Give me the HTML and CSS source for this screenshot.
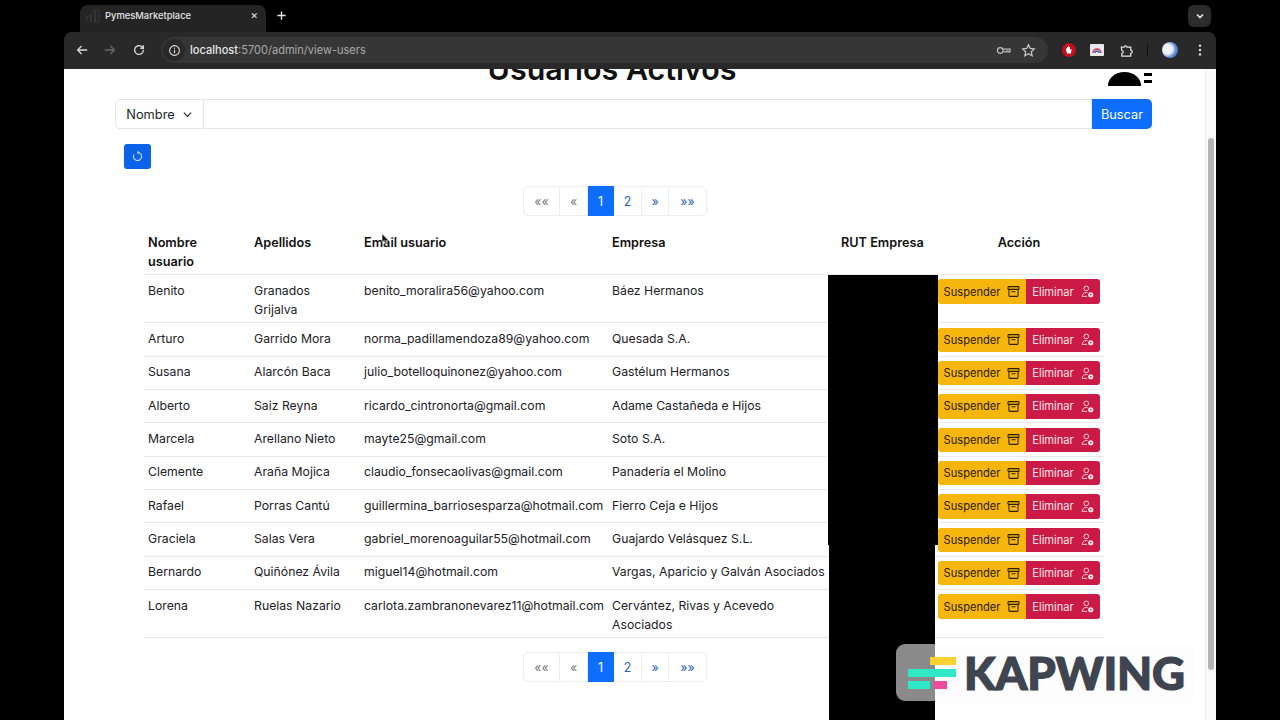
FILE: index.html
```html
<!DOCTYPE html>
<html lang="es">
<head>
<meta charset="utf-8">
<title>PymesMarketplace</title>
<link rel="stylesheet" href="styles.css">
</head>
<body>
<svg class="defs" width="0" height="0">
  <symbol id="archive" viewBox="0 0 16 16"><rect x="1.2" y="2" width="13.6" height="3.4" rx=".8" fill="none" stroke="currentColor" stroke-width="1.3"/><path d="M2.4 5.4V13a1 1 0 0 0 1 1h9.2a1 1 0 0 0 1-1V5.4M5.5 8.2h5" fill="none" stroke="currentColor" stroke-width="1.3"/></symbol>
  <symbol id="person-gear" viewBox="0 0 16 16"><circle cx="6.5" cy="4.2" r="2.9" fill="none" stroke="currentColor" stroke-width="1.1"/><path d="M1.4 14c.1-3 2.3-4.8 5.1-4.8.6 0 1.1.1 1.6.2M1.4 14h6" fill="none" stroke="currentColor" stroke-width="1.1"/><circle cx="12" cy="12" r="2.1" fill="none" stroke="currentColor" stroke-width="2.2"/></symbol>
</svg>
<div class="window">
  <div class="tabstrip">
    <div class="tab">
      <svg class="favicon" viewBox="0 0 16 16"><path d="M1 15V9l4-2v8M6 15V5l4-3v13M11 15V1h4v14z" fill="none" stroke="#3c3c3c"/></svg>
      <span class="tab-title">PymesMarketplace</span>
      <span class="tab-close">✕</span>
    </div>
    <svg class="newtab" viewBox="0 0 12 12"><path d="M6 1.5v9M1.5 6h9" stroke="#e8e8e8" stroke-width="1.5"/></svg>
    <div class="tabmenu"><svg viewBox="0 0 12 12"><path d="M3 4.500 6 7.500 9 4.500" fill="none" stroke="#e8e8e8" stroke-width="1.600"/></svg></div>
  </div>
  <div class="toolbar">
    <svg class="nav nav-back" viewBox="0 0 16 16"><path d="M14 8H3M7.500 3.500 3 8l4.500 4.500" fill="none" stroke="#d8d8d8" stroke-width="1.500"/></svg>
    <svg class="nav" viewBox="0 0 16 16"><path d="M2 8h11M8.500 3.500 13 8l-4.500 4.500" fill="none" stroke="#666" stroke-width="1.500"/></svg>
    <svg class="nav" viewBox="0 0 16 16"><path d="M13 8a5 5 0 1 1-1.500-3.500L13 6V2.500M13 6H9.500" fill="none" stroke="#d8d8d8" stroke-width="1.500"/></svg>
    <div class="omnibox">
      <span class="info"><svg viewBox="0 0 16 16"><circle cx="8" cy="8" r="6" fill="none" stroke="#e0e0e0" stroke-width="1.300"/><path d="M8 7.200v4M8 4.600v1.300" stroke="#e0e0e0" stroke-width="1.400"/></svg></span>
      <span class="url"><b>localhost</b>:5700/admin/view-users</span>
      <svg class="omni-icon" viewBox="0 0 16 16"><circle cx="4.500" cy="8" r="3" fill="none" stroke="#bbb" stroke-width="1.300"/><path d="M7.500 6.500h7.500v3h-2v-1h-1.500v1H8" fill="none" stroke="#bbb" stroke-width="1.200"/></svg>
      <svg class="omni-icon" viewBox="0 0 16 16"><path d="m8 1.800 1.900 4 4.300.5-3.200 3 .9 4.300L8 11.500l-3.900 2.100.9-4.300-3.200-3 4.300-.5z" fill="none" stroke="#c8c8c8" stroke-width="1.300"/></svg>
    </div>
    <div class="extensions">
      <span class="ext-red"><svg viewBox="0 0 10 10"><path d="M3 8.500 2 5V3l1 1V2h1v2V1.500h1V4V2h1v3l1-1 .6.500L7 8.500z" fill="#fff"/></svg></span>
      <span class="ext-card"><svg viewBox="0 0 14 12"><rect width="14" height="12" rx="1" fill="#e8e8ee"/><path d="M3 9a4 4 0 0 1 8 0" fill="none" stroke="#d8324a" stroke-width="1.500"/><path d="M5 9a2 2 0 0 1 4 0" fill="none" stroke="#2a62c8" stroke-width="1.500"/></svg></span>
      <svg class="omni-icon" viewBox="0 0 16 16"><path d="M2.500 4.500h3a1.500 1.500 0 0 1 3 0h4v3.200a1.500 1.500 0 0 1 0 3.300v3h-9.500v-3a1.500 1.500 0 0 0 0-3z" fill="none" stroke="#e4e4e4" stroke-width="1.300"/></svg>
      <span class="divider"></span>
      <span class="avatar"></span>
      <svg class="menu" viewBox="0 0 4 16"><circle cx="2" cy="3" r="1.400" fill="#e0e0e0"/><circle cx="2" cy="8" r="1.400" fill="#e0e0e0"/><circle cx="2" cy="13" r="1.400" fill="#e0e0e0"/></svg>
    </div>
  </div>
  <div class="page">
    <main class="content">
      <h1 class="title">Usuarios Activos</h1>
      <form class="search">
        <button type="button" class="search-select">Nombre <svg viewBox="0 0 12 12"><path d="M2 4l4 4 4-4" fill="none" stroke="#212529" stroke-width="1.300"/></svg></button>
        <span class="search-input"></span>
        <button type="button" class="search-btn">Buscar</button>
      </form>
      <button type="button" class="refresh"><svg viewBox="0 0 16 16"><path d="M8 3a5 5 0 1 1-4.300 2.500" fill="none" stroke="#cfe0ff" stroke-width="1.300"/><path d="M8 .8v4.400L10.600 3z" fill="#cfe0ff"/></svg></button>
      <nav class="pager pager-top">
        <span class="pg off pg-a">««</span><span class="pg off pg-b">«</span><span class="pg on pg-c">1</span><span class="pg pg-d">2</span><span class="pg pg-e">»</span><span class="pg pg-f">»»</span>
      </nav>
      <table class="users">
        <colgroup><col class="c1"><col class="c2"><col class="c3"><col class="c4"><col class="c5"><col class="c6"></colgroup>
        <thead>
          <tr><th>Nombre<br>usuario</th><th>Apellidos</th><th>Email usuario</th><th>Empresa</th><th>RUT Empresa</th><th class="center">Acción</th></tr>
        </thead>
        <tbody>
          <tr><td>Benito</td><td>Granados Grijalva</td><td>benito_moralira56@yahoo.com</td><td>Báez Hermanos</td><td></td><td class="actions"><div class="btns"><button class="btn-s">Suspender <svg><use href="#archive"/></svg></button><button class="btn-e">Eliminar <svg><use href="#person-gear"/></svg></button></div></td></tr>
          <tr><td>Arturo</td><td>Garrido Mora</td><td>norma_padillamendoza89@yahoo.com</td><td>Quesada S.A.</td><td></td><td class="actions"><div class="btns"><button class="btn-s">Suspender <svg><use href="#archive"/></svg></button><button class="btn-e">Eliminar <svg><use href="#person-gear"/></svg></button></div></td></tr>
          <tr><td>Susana</td><td>Alarcón Baca</td><td>julio_botelloquinonez@yahoo.com</td><td>Gastélum Hermanos</td><td></td><td class="actions"><div class="btns"><button class="btn-s">Suspender <svg><use href="#archive"/></svg></button><button class="btn-e">Eliminar <svg><use href="#person-gear"/></svg></button></div></td></tr>
          <tr><td>Alberto</td><td>Saiz Reyna</td><td>ricardo_cintronorta@gmail.com</td><td>Adame Castañeda e Hijos</td><td></td><td class="actions"><div class="btns"><button class="btn-s">Suspender <svg><use href="#archive"/></svg></button><button class="btn-e">Eliminar <svg><use href="#person-gear"/></svg></button></div></td></tr>
          <tr><td>Marcela</td><td>Arellano Nieto</td><td>mayte25@gmail.com</td><td>Soto S.A.</td><td></td><td class="actions"><div class="btns"><button class="btn-s">Suspender <svg><use href="#archive"/></svg></button><button class="btn-e">Eliminar <svg><use href="#person-gear"/></svg></button></div></td></tr>
          <tr><td>Clemente</td><td>Araña Mojica</td><td>claudio_fonsecaolivas@gmail.com</td><td>Panadería el Molino</td><td></td><td class="actions"><div class="btns"><button class="btn-s">Suspender <svg><use href="#archive"/></svg></button><button class="btn-e">Eliminar <svg><use href="#person-gear"/></svg></button></div></td></tr>
          <tr><td>Rafael</td><td>Porras Cantú</td><td>guillermina_barriosesparza@hotmail.com</td><td>Fierro Ceja e Hijos</td><td></td><td class="actions"><div class="btns"><button class="btn-s">Suspender <svg><use href="#archive"/></svg></button><button class="btn-e">Eliminar <svg><use href="#person-gear"/></svg></button></div></td></tr>
          <tr><td>Graciela</td><td>Salas Vera</td><td>gabriel_morenoaguilar55@hotmail.com</td><td>Guajardo Velásquez S.L.</td><td></td><td class="actions"><div class="btns"><button class="btn-s">Suspender <svg><use href="#archive"/></svg></button><button class="btn-e">Eliminar <svg><use href="#person-gear"/></svg></button></div></td></tr>
          <tr><td>Bernardo</td><td>Quiñónez Ávila</td><td>miguel14@hotmail.com</td><td>Vargas, Aparicio y Galván Asociados</td><td></td><td class="actions"><div class="btns"><button class="btn-s">Suspender <svg><use href="#archive"/></svg></button><button class="btn-e">Eliminar <svg><use href="#person-gear"/></svg></button></div></td></tr>
          <tr><td>Lorena</td><td>Ruelas Nazario</td><td>carlota.zambranonevarez11@hotmail.com</td><td>Cervántez, Rivas y Acevedo Asociados</td><td></td><td class="actions"><div class="btns"><button class="btn-s">Suspender <svg><use href="#archive"/></svg></button><button class="btn-e">Eliminar <svg><use href="#person-gear"/></svg></button></div></td></tr>
        </tbody>
      </table>
      <nav class="pager pager-bottom">
        <span class="pg off pg-a">««</span><span class="pg off pg-b">«</span><span class="pg on pg-c">1</span><span class="pg pg-d">2</span><span class="pg pg-e">»</span><span class="pg pg-f">»»</span>
      </nav>
    </main>
    <div class="scrollbar"><span class="thumb"></span></div>
  </div>
</div>
<div class="redact redact-a"></div>
<div class="redact redact-b"></div>
<div class="blob"><span class="blob-shape"></span><span class="blob-dashes"></span></div>
<svg class="cursor" viewBox="0 0 10 14"><path d="M1 1v10l2.500-2.200L5.500 13l1.500-.7L5.200 8.500H8.500z" fill="#111" stroke="#fff" stroke-width=".6"/></svg>
<div class="watermark">
  <div class="wm-tile"></div>
  <div class="wm-panel"></div>
  <span class="wm-bar wm-yellow"></span>
  <span class="wm-bar wm-teal1"></span>
  <span class="wm-bar wm-teal2"></span>
  <span class="wm-bar wm-pink"></span>
  <span class="wm-text">KAPWING</span>
</div>
</body>
</html>
```
FILE: styles.css
```css
* { box-sizing: border-box; }
html, body { margin: 0; height: 720px; overflow: hidden; }
body { background: #000; font-family: Inter, "Liberation Sans", sans-serif; color: #212529; position: relative; }
.defs { position: absolute; }

.window { margin: 0 64px; height: 720px; display: flex; flex-direction: column; overflow: hidden; }

.tabstrip { height: 32px; display: flex; align-items: flex-end; position: relative; background: #000; padding-left: 16px; flex: none; }
.tab { width: 186px; height: 27px; background: #242424; border-radius: 8px 8px 0 0; display: flex; align-items: center; padding: 0 8px 6px 6px; }
.favicon { width: 14px; height: 14px; flex: none; }
.tab-title { font-size: 9.4px; color: #e4e4e4; margin-left: 5px; flex: 1; white-space: nowrap; font-weight: 500; }
.tab-close { font-size: 9px; color: #ececec; font-family: "DejaVu Sans", sans-serif; }
.newtab { width: 11px; height: 11px; margin: 0 0 11px 10px; flex: none; }
.tabmenu { width: 23px; height: 22px; background: #2c2c2c; border-radius: 6px; margin: 0 5px 5px auto; display: flex; align-items: center; justify-content: center; }
.tabmenu svg { width: 12px; height: 12px; }

.toolbar { height: 37px; background: #292929; border-radius: 8px 8px 0 0; display: flex; align-items: center; padding: 0 10px 1px; flex: none; }
.nav { width: 14px; height: 14px; flex: none; margin-right: 15px; }
.nav-back { margin-left: 1px; margin-right: 14px; }
.omnibox { width: 887px; height: 26px; background: #363636; border-radius: 13px; display: flex; align-items: center; padding: 0 12px 0 2px; flex: none; }
.info { width: 22px; height: 22px; background: #292929; border-radius: 50%; display: flex; align-items: center; justify-content: center; flex: none; }
.info svg { width: 13px; height: 13px; }
.url { font-size: 11.05px; color: #a9a9a9; margin-left: 5px; flex: 1; white-space: nowrap; }
.url b { color: #e6e6e6; font-weight: 500; }
.omni-icon { width: 15px; height: 15px; flex: none; margin-left: 10px; }
.extensions { display: flex; align-items: center; flex: 1; margin-left: 14px; }
.ext-red { width: 14px; height: 14px; background: #c50f1f; border-radius: 50%; display: flex; align-items: center; justify-content: center; }
.ext-red svg { width: 10px; height: 10px; }
.ext-card { margin-left: 14px; width: 14px; height: 12px; display: flex; }
.ext-card svg { width: 14px; height: 12px; }
.extensions .omni-icon { margin-left: 15px; }
.divider { width: 1px; height: 13px; background: #111; margin-left: 13px; }
.avatar { width: 16px; height: 16px; border-radius: 50%; margin-left: 14px; background: radial-gradient(circle at 35% 45%, #eef0f4 35%, #5f8fd8 60%, #2a55a8 100%); }
.menu { width: 4px; height: 14px; margin-left: 20px; }

.page { flex: 1; min-height: 0; display: flex; background: #fff; overflow: hidden; }
.content { flex: 1; min-width: 0; }
.scrollbar { width: 11px; background: #fafafa; border-left: 1px solid #efefef; padding-top: 69px; flex: none; }
.thumb { display: block; width: 6px; height: 532px; margin-left: 2px; background: #b5b5b5; border-radius: 3px; }

.title { width: 1096px; margin: -20px 0 10px; height: 40px; line-height: 40px; text-align: center; font-size: 30.4px; font-weight: 600; color: #111; }

.search { display: flex; height: 30px; margin: 0 53px 0 51px; font-size: 12.8px; }
.search-select { width: 89px; border: 1px solid #e3e5e8; background: #fff; border-radius: 5px 0 0 5px; font: inherit; color: #212529; display: flex; align-items: center; justify-content: center; gap: 7px; padding: 0; }
.search-select svg { width: 11px; height: 11px; }
.search-input { flex: 1; border: 1px solid #e3e5e8; border-left: 0; }
.search-btn { width: 60px; border: 0; background: #0d6efd; color: #fff; border-radius: 0 5px 5px 0; font: inherit; padding: 0; }

.refresh { display: flex; align-items: center; justify-content: center; width: 27px; height: 25px; margin: 15px 0 0 60px; padding: 0; border: 0; border-radius: 3px; background: #0d62ea; }
.refresh svg { width: 13px; height: 13px; }

.pager { display: flex; height: 30px; margin-left: 459px; width: 184px; font-size: 12.4px; }
.pager-top { margin-top: 17px; }
.pager-bottom { margin-top: 14px; }
.pg { display: flex; align-items: center; justify-content: center; border: 1px solid #eceef0; border-left: 0; color: #2a62b8; }
.off { color: #777; }
.on { background: #0d6efd; color: #fff; border-color: #0d6efd; }
.pg-a { width: 37px; border-left: 1px solid #eceef0; border-radius: 5px 0 0 5px; }
.pg-b { width: 28px; }
.pg-c { width: 26px; }
.pg-d { width: 28px; }
.pg-e { width: 27px; }
.pg-f { width: 38px; border-radius: 0 5px 5px 0; }

.users { border-collapse: collapse; table-layout: fixed; width: 960px; margin: 12px 0 0 80px; font-size: 12.25px; line-height: 19.2px; color: #1d2024; }
.c1 { width: 106px; } .c2 { width: 110px; } .c3 { width: 248px; } .c4 { width: 229px; } .c5 { width: 97px; } .c6 { width: 170px; }
.users th { text-align: left; font-size: 12.7px; font-weight: 600; padding: 5px 4px 2.6px; vertical-align: top; color: #111; border-bottom: 1px solid #e8e9eb; white-space: nowrap; }
.users th.center { text-align: center; }
.users td { padding: 5.8px 4px 3px; vertical-align: top; border-bottom: 1px solid #e8e9eb; }
.users td.actions { padding: 4.3px 4px 3.55px; }
.btns { display: flex; justify-content: center; }
.btn-s, .btn-e { display: flex; align-items: center; justify-content: center; gap: 7px; height: 24.5px; border: 0; padding: 0; font-family: inherit; font-size: 11.1px; }
.btn-s svg, .btn-e svg { width: 13px; height: 13px; flex: none; }
.btn-s { width: 88px; background: #f6b60e; color: #2b2006; border-radius: 3px 0 0 3px; }
.btn-e { width: 74px; background: #cb1a45; color: #fbe3e8; border-radius: 0 3px 3px 0; }

.redact { position: absolute; background: #000; }
.redact-a { left: 828px; top: 275px; width: 110px; height: 270px; }
.redact-b { left: 829px; top: 545px; width: 106px; height: 175px; }

.blob { position: absolute; left: 1108px; top: 72px; width: 45px; height: 14px; }
.blob-shape { position: absolute; left: 0; top: 0; width: 33px; height: 14px; background: #000; border-radius: 17px 17px 0 0 / 14px 14px 0 0; }
.blob-dashes { position: absolute; left: 36px; top: 1px; width: 8px; height: 10px; border-top: 3px solid #000; border-bottom: 3px solid #000; }

.cursor { position: absolute; left: 381px; top: 233px; width: 9px; height: 12px; }

.watermark { position: absolute; left: 896px; top: 644px; width: 300px; height: 58px; }
.wm-tile { position: absolute; left: 0; top: 0; width: 40px; height: 57px; background: #8a8a8a; border-radius: 9px 0 0 9px; }
.wm-panel { position: absolute; left: 39px; top: 0; width: 261px; height: 58px; background: #fdfdfd; }
.wm-bar { position: absolute; height: 8px; }
.wm-yellow { left: 34px; top: 13px; width: 26px; background: #f8d231; }
.wm-teal1 { left: 12px; top: 25px; width: 48px; background: #2ee8c8; }
.wm-teal2 { left: 12px; top: 37px; width: 22px; background: #2ee8c8; }
.wm-pink { left: 38px; top: 37px; width: 13px; background: #f0479f; }
.wm-text { position: absolute; left: 68px; top: 0; line-height: 58px; font-family: Lato, "Liberation Sans", sans-serif; font-weight: 900; font-size: 45.5px; color: #3e4450; letter-spacing: -.2px; -webkit-text-stroke: 1.2px #3e4450; white-space: nowrap; }
```
